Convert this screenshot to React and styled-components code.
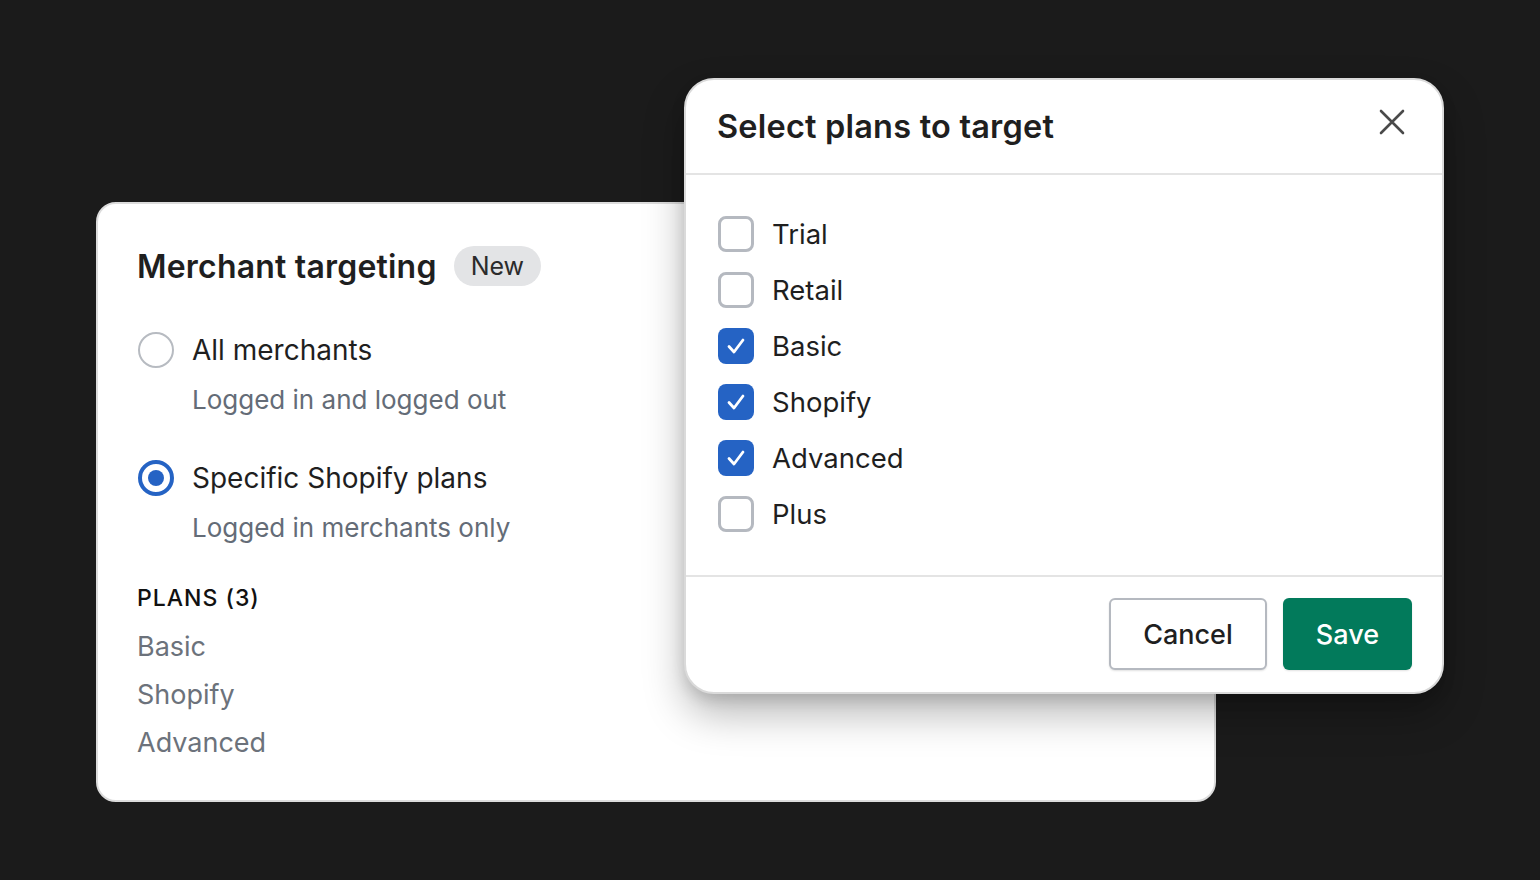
import React from "react";
import styled, { createGlobalStyle } from "styled-components";

const Global = createGlobalStyle`
  html, body { margin: 0; padding: 0; background: #1b1b1b; }
  body { font-family: Inter, "Noto Sans", "Liberation Sans", sans-serif; -webkit-font-smoothing: antialiased; }
  * { box-sizing: border-box; }
`;

const Stage = styled.div`
  position: relative;
  width: 1540px;
  height: 880px;
  background: #1b1b1b;
  overflow: hidden;
  padding: 202px 0 0 96px;
`;

const Card = styled.section`
  width: 1120px;
  height: 600px;
  background: #ffffff;
  border: 2px solid #dcdcdc;
  border-radius: 20px;
  padding: 42px 39px;
  display: flex;
  flex-direction: column;
`;

const HeaderRow = styled.div`
  display: flex;
  align-items: center;
  gap: 17px;
  height: 40px;
`;

const CardTitle = styled.h2`
  margin: 0;
  font-size: 32px;
  font-weight: 600;
  color: #1f1f1f;
  letter-spacing: 0.2px;
`;

const Badge = styled.span`
  height: 40px;
  padding: 0 17px;
  border-radius: 20px;
  background: #e3e4e6;
  color: #2b2b2b;
  font-size: 25px;
  display: inline-flex;
  align-items: center;
`;

const Option = styled.div`
  display: flex;
  flex-direction: column;
  margin-top: ${(p) => p.$top}px;
`;

const OptionRow = styled.div`
  display: flex;
  align-items: center;
  gap: 18px;
  height: 36px;
`;

const Radio = styled.span`
  width: 36px;
  height: 36px;
  margin-left: 1px;
  border-radius: 50%;
  border: ${(p) => (p.$checked ? "4px solid #2563c4" : "2px solid #b7bbc1")};
  display: inline-flex;
  align-items: center;
  justify-content: center;
  flex-shrink: 0;
  &::after {
    content: "";
    display: ${(p) => (p.$checked ? "block" : "none")};
    width: 16px;
    height: 16px;
    border-radius: 50%;
    background: #2563c4;
  }
`;

const OptionLabel = styled.span`
  font-size: 28px;
  color: #1f1f1f;
  line-height: 36px;
`;

const OptionHelp = styled.span`
  margin-top: 14px;
  padding-left: 55px;
  font-size: 26px;
  line-height: 36px;
  color: #646c77;
`;

const PlansHeading = styled.div`
  margin-top: 36px;
  font-size: 23px;
  font-weight: 500;
  letter-spacing: 1px;
  line-height: 32px;
  color: #111;
`;

const PlanList = styled.ul`
  margin: 9px 0 0;
  padding: 0;
  list-style: none;
`;

const PlanItem = styled.li`
  font-size: 27px;
  line-height: 48px;
  color: #6c727b;
`;

const Modal = styled.div`
  position: absolute;
  left: 684px;
  top: 78px;
  width: 760px;
  height: 616px;
  background: #ffffff;
  border: 2px solid #dadada;
  border-radius: 30px;
  box-shadow: 0 20px 40px rgba(0, 0, 0, 0.28), 0 6px 14px rgba(0, 0, 0, 0.12);
  display: flex;
  flex-direction: column;
  overflow: hidden;
`;

const ModalHeader = styled.header`
  height: 95px;
  flex-shrink: 0;
  display: flex;
  align-items: center;
  justify-content: space-between;
  padding: 0 35px 0 31px;
  border-bottom: 2px solid #e4e4e4;
`;

const ModalTitle = styled.h3`
  margin: 0;
  font-size: 32.5px;
  font-weight: 600;
  color: #1f1f1f;
  letter-spacing: 0.2px;
`;

const CloseButton = styled.button`
  width: 30px;
  height: 30px;
  padding: 0;
  margin-bottom: 10px;
  border: none;
  background: none;
  display: flex;
  align-items: center;
  justify-content: center;
  cursor: pointer;
`;

const ModalBody = styled.div`
  flex: 1;
  padding: 31px 32px 0;
  display: flex;
  flex-direction: column;
`;

const CheckRow = styled.label`
  height: 56px;
  display: flex;
  align-items: center;
  gap: 18px;
`;

const Checkbox = styled.span`
  width: 36px;
  height: 36px;
  border-radius: 8px;
  border: ${(p) => (p.$checked ? "none" : "3px solid #b5b9c0")};
  background: ${(p) => (p.$checked ? "#2563c4" : "#fff")};
  display: inline-flex;
  align-items: center;
  justify-content: center;
  flex-shrink: 0;
`;

const CheckLabel = styled.span`
  font-size: 27.5px;
  color: #1f1f1f;
`;

const ModalFooter = styled.footer`
  height: 117px;
  flex-shrink: 0;
  border-top: 2px solid #e4e4e4;
  display: flex;
  justify-content: flex-end;
  align-items: flex-start;
  gap: 16px;
  padding: 21px 30px 0 0;
`;

const Button = styled.button`
  height: 72px;
  padding: 0 ${(p) => (p.$primary ? 33 : 32)}px;
  border-radius: 6px;
  font-family: inherit;
  font-size: 27px;
  font-weight: 500;
  cursor: pointer;
  border: ${(p) => (p.$primary ? "none" : "2px solid #b5b9c0")};
  background: ${(p) => (p.$primary ? "#027a5b" : "#ffffff")};
  color: ${(p) => (p.$primary ? "#ffffff" : "#1f1f1f")};
  box-shadow: 0 1px 2px rgba(0, 0, 0, 0.12);
`;

const Check = () => (
  <svg width="22" height="22" viewBox="0 0 22 22" fill="none">
    <path d="M4 11.5 L9 17 L18 5" stroke="#fff" strokeWidth="2.8" strokeLinecap="round" strokeLinejoin="round" />
  </svg>
);

const CloseIcon = () => (
  <svg width="26" height="26" viewBox="0 0 26 26" fill="none">
    <path d="M2 2 L24 24 M24 2 L2 24" stroke="#4a4a4a" strokeWidth="2.6" strokeLinecap="round" />
  </svg>
);

const plans = [
  { name: "Trial", checked: false },
  { name: "Retail", checked: false },
  { name: "Basic", checked: true },
  { name: "Shopify", checked: true },
  { name: "Advanced", checked: true },
  { name: "Plus", checked: false },
];

export default function App() {
  return (
    <>
      <Global />
      <Stage>
        <Card>
          <HeaderRow>
            <CardTitle>Merchant targeting</CardTitle>
            <Badge>New</Badge>
          </HeaderRow>
          <Option $top={46}>
            <OptionRow>
              <Radio />
              <OptionLabel>All merchants</OptionLabel>
            </OptionRow>
            <OptionHelp>Logged in and logged out</OptionHelp>
          </Option>
          <Option $top={42}>
            <OptionRow>
              <Radio $checked />
              <OptionLabel>Specific Shopify plans</OptionLabel>
            </OptionRow>
            <OptionHelp>Logged in merchants only</OptionHelp>
          </Option>
          <PlansHeading>PLANS (3)</PlansHeading>
          <PlanList>
            {plans.filter((p) => p.checked).map((p) => (
              <PlanItem key={p.name}>{p.name}</PlanItem>
            ))}
          </PlanList>
        </Card>
        <Modal>
          <ModalHeader>
            <ModalTitle>Select plans to target</ModalTitle>
            <CloseButton aria-label="Close">
              <CloseIcon />
            </CloseButton>
          </ModalHeader>
          <ModalBody>
            {plans.map((p) => (
              <CheckRow key={p.name}>
                <Checkbox $checked={p.checked}>{p.checked && <Check />}</Checkbox>
                <CheckLabel>{p.name}</CheckLabel>
              </CheckRow>
            ))}
          </ModalBody>
          <ModalFooter>
            <Button>Cancel</Button>
            <Button $primary>Save</Button>
          </ModalFooter>
        </Modal>
      </Stage>
    </>
  );
}
